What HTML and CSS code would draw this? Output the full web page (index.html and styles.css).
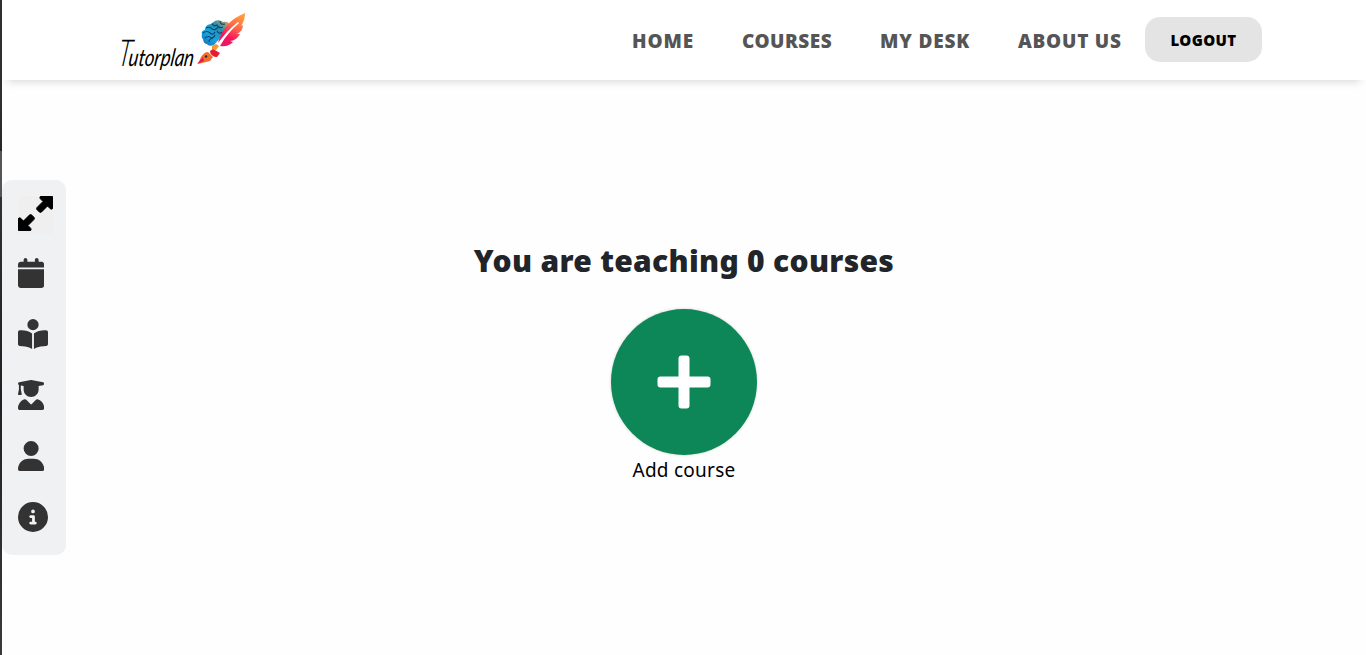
FILE: index.html
```
<!DOCTYPE html>
<html lang="en">
<head>
<meta charset="utf-8">
<title>Tutorplan</title>
<link rel="stylesheet" href="styles.css">
</head>
<body>
<header class="navbar">
  <a class="brand" aria-label="Tutorplan">
    <svg width="136" height="72" viewBox="0 0 136 72">
      <defs>
        <linearGradient id="brain" x1="0" y1="1" x2="1" y2="0">
          <stop offset="0" stop-color="#1768b8"/><stop offset=".35" stop-color="#15a5dc"/><stop offset=".65" stop-color="#2590b0"/><stop offset="1" stop-color="#efa94b"/>
        </linearGradient>
        <linearGradient id="feather" x1=".8" y1="0" x2=".3" y2="1">
          <stop offset="0" stop-color="#ffa13b"/><stop offset=".4" stop-color="#ff6847"/><stop offset=".75" stop-color="#f5155c"/><stop offset="1" stop-color="#ec1764"/>
        </linearGradient>
      </defs>
      <g transform="translate(3 58) skewX(-8) scale(.68 1)">
        <text class="wordmark big" x="0" y="0">T</text>
        <text class="wordmark" x="16" y="0" textLength="96" lengthAdjust="spacingAndGlyphs">utorplan</text>
      </g>
      <path fill="url(#brain)" d="M89 31c-2-2-1-4-1-5-1-2 1-4 3-4 0-4 3-6 7-6 2-4 7-5 11-2 4-1 7 1 7 4-2 4-5 6-8 10l-8 9c-3 1-6 1-7-1-2 0-4-2-4-5z"/>
      <path class="fold" d="M89 25q4-3 7 0t5-1M92 20q4-2 6 1 4 2 6-2M98 15q1 4 5 2 2 4 6 2M106 13q0 4 5 3M91 30q4-3 6 0 3 0 4-3M95 34q0-3 4-4M103 23q2 4 5 1"/>
      <path fill="url(#feather)" d="M131 5c-7 3-14 7-19 14-4 5-6 9-8 16 6-8 12-15 20-21l1 1c-8 7-14 14-19 23 5 1 9 0 13-4l-3-1c4 0 8-3 10-7l-3 0c4-2 6-5 6-9l-2 1c3-4 4-9 4-13z"/>
      <path fill="#f79632" d="M98 38l4-2 3 2-3 4-4-1z"/>
      <path fill="#e51d31" d="M96 43l3-2 7 4-3 4c-3 0-7-2-7-6z"/>
      <path fill="#f36d2c" d="M94 44l5 5-3 4-12 3 3-7c2-3 4-5 7-5z"/>
      <path fill="#e7194b" d="M83 56l6-7 1 4z"/>
      <circle cx="92" cy="48.500" r="1.300" fill="#3d2630"/>
    </svg>
  </a>
  <nav class="links">
    <a class="link home">HOME</a>
    <a class="link courses">COURSES</a>
    <a class="link desk">MY DESK</a>
    <a class="link about">ABOUT US</a>
    <button class="logout">LOGOUT</button>
  </nav>
</header>
<div class="edge"></div>
<aside class="sidebar">
  <button class="expand" aria-label="Expand"><svg width="35" height="35" viewBox="0 0 512 512"><path stroke="#000" stroke-width="14" d="M344 0L488 0c13.300 0 24 10.700 24 24l0 144c0 9.700-5.800 18.500-14.800 22.200s-19.300 1.700-26.200-5.200l-39-39-87 87c-9.400 9.400-24.600 9.400-33.900 0l-32-32c-9.400-9.400-9.400-24.600 0-33.900l87-87L327 41c-6.900-6.900-8.900-17.200-5.200-26.200S334.300 0 344 0zM168 512L24 512c-13.300 0-24-10.700-24-24L0 344c0-9.700 5.800-18.500 14.800-22.200s19.300-1.700 26.200 5.200l39 39 87-87c9.400-9.400 24.600-9.400 33.900 0l32 32c9.400 9.400 9.400 24.600 0 33.900l-87 87 39 39c6.900 6.900 8.900 17.200 5.200 26.200s-12.500 14.800-22.200 14.800z"/></svg></button>
  <svg class="icon" viewBox="0 0 448 512" width="26.250"><path d="M96 32V64H48C21.500 64 0 85.500 0 112v48H448V112c0-26.500-21.500-48-48-48H352V32c0-17.700-14.300-32-32-32s-32 14.300-32 32V64H160V32c0-17.700-14.300-32-32-32S96 14.300 96 32zM448 192H0V464c0 26.500 21.500 48 48 48H400c26.500 0 48-21.500 48-48V192z"/></svg>
  <svg class="icon" viewBox="0 0 512 512" width="30"><path d="M160 96a96 96 0 1 1 192 0A96 96 0 1 1 160 96zm80 152V512l-48.400-24.200c-20.900-10.400-43.500-17-66.800-19.300l-96-9.600C12.500 457.200 0 443.500 0 427V224c0-17.700 14.300-32 32-32H62.300c63.600 0 125.600 19.600 177.700 56zm32 264V248c52.100-36.400 114.100-56 177.700-56H480c17.700 0 32 14.300 32 32V427c0 16.400-12.500 30.200-28.800 31.800l-96 9.600c-23.200 2.300-45.900 8.900-66.800 19.300L272 512z"/></svg>
  <svg class="icon" viewBox="0 0 448 512" width="26.250"><path d="M219.300 .5c3.100-.6 6.300-.6 9.400 0l200 40C439.900 42.700 448 52.600 448 64s-8.100 21.300-19.300 23.500L352 102.900V160c0 70.700-57.300 128-128 128s-128-57.300-128-128V102.900L48 93.300v65.100l15.700 78.400c.9 4.700-.3 9.600-3.300 13.300s-7.600 5.900-12.400 5.900H16c-4.800 0-9.300-2.100-12.400-5.900s-4.300-8.600-3.300-13.300L16 158.400V86.600C6.500 83.300 0 74.300 0 64C0 52.600 8.100 42.700 19.300 40.500l200-40zM111.900 327.700c10.500-3.400 21.800 .4 29.400 8.500l71 75.500c6.300 6.700 17 6.700 23.300 0l71-75.500c7.600-8.100 18.900-11.900 29.400-8.500C401 348.600 448 409.400 448 481.300c0 17-13.800 30.700-30.700 30.700H30.700C13.800 512 0 498.200 0 481.300c0-71.900 47-132.700 111.900-153.600z"/></svg>
  <svg class="icon" viewBox="0 0 448 512" width="26.250"><path d="M224 256A128 128 0 1 0 224 0a128 128 0 1 0 0 256zm-45.700 48C79.800 304 0 383.800 0 482.300C0 498.700 13.300 512 29.700 512H418.300c16.400 0 29.700-13.300 29.700-29.700C448 383.800 368.200 304 269.700 304H178.300z"/></svg>
  <svg class="icon" viewBox="0 0 512 512" width="30"><path d="M256 512A256 256 0 1 0 256 0a256 256 0 1 0 0 512zM216 336h24V272H216c-13.300 0-24-10.700-24-24s10.700-24 24-24h48c13.300 0 24 10.700 24 24v88h8c13.300 0 24 10.700 24 24s-10.700 24-24 24H216c-13.300 0-24-10.700-24-24s10.700-24 24-24zm40-208a32 32 0 1 1 0 64 32 32 0 1 1 0-64z"/></svg>
</aside>
<main class="content">
  <h1 class="title">You are teaching 0 courses</h1>
  <button class="add" aria-label="Add course"><svg width="54" height="54" viewBox="0 0 54 54"><path d="M24.500 .5h5a3 3 0 0 1 3 3v18h18a3 3 0 0 1 3 3v5a3 3 0 0 1-3 3h-18v18a3 3 0 0 1-3 3h-5a3 3 0 0 1-3-3v-18h-18a3 3 0 0 1-3-3v-5a3 3 0 0 1 3-3h18v-18a3 3 0 0 1 3-3z"/></svg></button>
  <div class="add-label">Add course</div>
</main>
</body>
</html>
```
FILE: styles.css
```
* { box-sizing: border-box; }
body {
  margin: 0;
  height: 655px;
  overflow: hidden;
  background: #fefefe;
  font-family: "Noto Sans", "Open Sans", sans-serif;
}
.navbar {
  display: flex;
  justify-content: space-between;
  height: 80px;
  margin-left: 2px;
  padding: 0 104px 0 112px;
  background: #fff;
  box-shadow: 0 8px 8px -6px rgba(0, 0, 0, .15);
}
.brand { padding-top: 8px; }
.brand svg { display: block; overflow: visible; }
.wordmark { font: italic 400 24px Lato, sans-serif; fill: #000; }
.big { font-size: 37px; font-weight: 300; }
.fold { fill: none; stroke: #123f70; stroke-width: 1.1; }
.links { display: flex; align-items: center; height: 78px; }
.link {
  color: #555;
  font-size: 19px;
  font-weight: 900;
  line-height: 28px;
  margin-right: 48px;
  white-space: nowrap;
  padding-top: 4px;
}
.home { width: 62px; letter-spacing: .9px; }
.courses { width: 90px; letter-spacing: .5px; }
.desk { width: 90px; letter-spacing: .85px; }
.about { width: 103px; margin-right: 24px; letter-spacing: .75px; }
.logout {
  width: 117px;
  height: 45px;
  border: 0;
  padding: 2px 0 0;
  border-radius: 15px;
  background: #e4e4e4;
  color: #000;
  font: 900 15px "Noto Sans", sans-serif;
  letter-spacing: .4px;
}
.edge {
  position: absolute;
  left: 0;
  top: 0;
  width: 2px;
  height: 655px;
  background: linear-gradient(#303030 0 100px, #262626 151px, #555 151px 197px, #303033 197px, #202124 400px, #3a3a3c 655px);
}
.sidebar {
  position: absolute;
  left: 2px;
  top: 180px;
  width: 64px;
  height: 375px;
  padding: 16px 0 0 16px;
  border-radius: 10px;
  background: #f0f1f3;
  display: flex;
  flex-direction: column;
  align-items: flex-start;
  gap: 31px;
}
.expand {
  width: 35px;
  height: 38px;
  margin-bottom: -7px;
  padding: 0;
  border: 0;
  background: #efefef;
}
.expand svg { display: block; margin-bottom: 3px; }
.icon { display: block; height: 30px; flex: none; fill: #333; }
.content {
  display: flex;
  flex-direction: column;
  align-items: center;
  padding: 160px 0 0 2px;
}
.title {
  margin: 0;
  font-size: 30px;
  font-weight: 900;
  line-height: 42px;
  letter-spacing: .3px;
  color: #212529;
  white-space: nowrap;
}
.add {
  display: grid;
  place-items: center;
  width: 146px;
  height: 146px;
  margin-top: 27px;
  padding: 0;
  border: 0;
  border-radius: 50%;
  background: #0d8757;
  box-shadow: 0 0 3px rgba(0, 0, 0, .2);
}
.add svg { fill: #fff; }
.add-label { font-size: 19px; line-height: 28px; letter-spacing: .25px; padding-top: 1px; color: #000; }
```
